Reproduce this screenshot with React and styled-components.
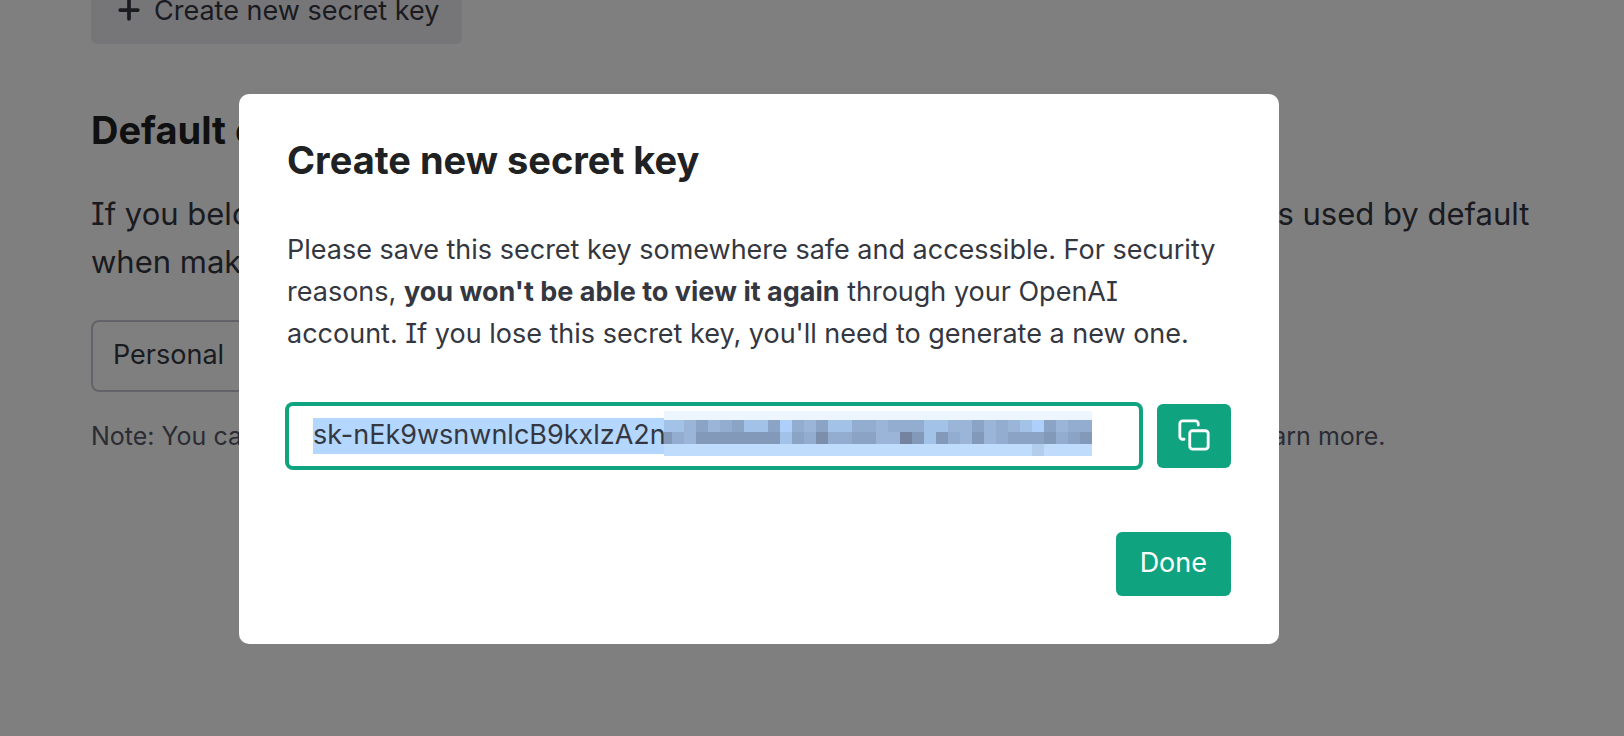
import React, { useState } from 'react';
import styled, { createGlobalStyle } from 'styled-components';
import { FiCopy, FiPlus } from 'react-icons/fi';

const GlobalStyle = createGlobalStyle`
  *, *::before, *::after {
    box-sizing: border-box;
  }
  body {
    margin: 0;
    background: #ffffff;
    color: #353740;
    font-family: Inter, 'Liberation Sans', sans-serif;
    font-feature-settings: 'cv08';
    overflow: hidden;
  }
  button, input, select {
    font: inherit;
    font-feature-settings: inherit;
  }
`;

const Page = styled.main`
  display: flex;
  flex-direction: column;
  align-items: flex-start;
  min-height: 100vh;
  padding: 0 91px;
`;

const Button = styled.button`
  display: inline-flex;
  align-items: center;
  justify-content: center;
  gap: 10px;
  height: 64px;
  padding: 0 24px 4px;
  border: none;
  border-radius: 6px;
  font-size: 27px;
  white-space: nowrap;
  cursor: pointer;
  background: ${(props) => (props.$primary ? '#10a37f' : '#ececf1')};
  color: ${(props) => (props.$primary ? '#ffffff' : '#353740')};
`;

// the page is scrolled a little, so the top of this button is cut off
const NewKeyButton = styled(Button)`
  margin-top: -20px;
  padding: 0 23px 4px;
`;

const IconButton = styled(Button)`
  width: 74px;
  padding: 0 0 2px;
`;

const SectionTitle = styled.h2`
  margin: 62px 0 36px;
  font-size: 38px;
  line-height: 48px;
  font-weight: 700;
  color: #202123;
`;

const SectionText = styled.p`
  margin: 0 0 34px;
  font-size: 31px;
  line-height: 48px;
`;

const OrgSelect = styled.select`
  appearance: none;
  width: 480px;
  max-width: 100%;
  height: 72px;
  padding: 0 20px 4px;
  border: 2px solid #c5c5d2;
  border-radius: 8px;
  background: #ffffff;
  color: #353740;
  font-size: 27px;
`;

const Note = styled.p`
  margin: 26px 0 0;
  font-size: 25px;
  line-height: 36px;
  color: #565869;

  a {
    color: inherit;
    text-decoration: none;
  }
`;

const Backdrop = styled.div`
  position: fixed;
  inset: 0;
  display: flex;
  justify-content: center;
  align-items: flex-start;
  padding: 94px 106px 0 0;
  background: rgba(0, 0, 0, 0.5);
`;

const Modal = styled.section`
  width: 100%;
  max-width: 1040px;
  padding: 48px;
  border-radius: 10px;
  background: #ffffff;
`;

const ModalTitle = styled.h1`
  margin: 0 0 51px;
  font-size: 38px;
  line-height: 36px;
  font-weight: 700;
  color: #202123;
`;

const ModalText = styled.p`
  margin: 0 0 49px;
  font-size: 27px;
  line-height: 42px;
`;

const KeyRow = styled.div`
  display: flex;
  gap: 16px;
`;

const KeyField = styled.div`
  position: relative;
  flex: 1;
`;

const KeyInput = styled.input`
  display: block;
  width: 100%;
  height: 64px;
  padding: 0 24px 4px;
  border: 2px solid #10a37f;
  border-radius: 6px;
  outline: none;
  box-shadow: 0 0 0 2px #10a37f;
  color: #353740;
  font-size: 27px;
  background: linear-gradient(#b3d7ff, #b3d7ff) 24px 12px / 380px 36px no-repeat #ffffff;
`;

const Mosaic = styled.svg`
  position: absolute;
  top: 7px;
  left: 377px;
  pointer-events: none;
`;

const Footer = styled.footer`
  display: flex;
  justify-content: flex-end;
  margin-top: 64px;
`;

const shades = {
  a: '#adcffa',
  b: '#a3c2e8',
  c: '#9ab5d8',
  d: '#92add0',
  e: '#8ba3c4',
  f: '#8399b9',
  g: '#7b8eac',
  h: '#74839f',
  l: '#c0dcfd',
  m: '#b3ceec',
};

const mosaicRows = [
  'bbcecdebbeadcebbddcdddbbccecdcbaecdd',
  'fdcfffffffbedgddeecchfbfdcfcdeeefdef',
  'lllllllllllllllllllllllllllllllmllll',
];

// hides the tail of the key; the first column is narrower than the others
const KeyMosaic = () => (
  <Mosaic width="428" height="45" viewBox="0 0 428 45" shapeRendering="crispEdges" aria-hidden="true">
    <rect width="428" height="9" fill="#edf5ff" />
    {mosaicRows.map((row, y) =>
      row.split('').map((shade, x) => (
        <rect
          key={`${x}-${y}`}
          x={x === 0 ? 0 : x * 12 - 4}
          y={9 + y * 12}
          width={x === 0 ? 8 : 12}
          height="12"
          fill={shades[shade]}
        />
      ))
    )}
  </Mosaic>
);

const SecretKeyModal = ({ onClose }) => {
  const secret = 'sk-nEk9wsnwnlcB9kxlzA2n';

  const handleCopy = () => {
    navigator.clipboard?.writeText(secret);
  };

  return (
    <Backdrop>
      <Modal role="dialog" aria-modal="true" aria-labelledby="modal-title">
        <ModalTitle id="modal-title">Create new secret key</ModalTitle>
        <ModalText>
          Please save this secret key somewhere safe and accessible. For security reasons,{' '}
          <strong>you won't be able to view it again</strong> through your OpenAI account. If you lose
          this secret key, you'll need to generate a new one.
        </ModalText>
        <KeyRow>
          <KeyField>
            <KeyInput type="text" aria-label="Secret key" value={secret} readOnly />
            <KeyMosaic />
          </KeyField>
          <IconButton $primary type="button" aria-label="Copy" onClick={handleCopy}>
            <FiCopy size={34} />
          </IconButton>
        </KeyRow>
        <Footer>
          <Button $primary type="button" onClick={onClose}>Done</Button>
        </Footer>
      </Modal>
    </Backdrop>
  );
};

export default function App() {
  const [open, setOpen] = useState(true);

  return (
    <>
      <GlobalStyle />
      <Page>
        <NewKeyButton type="button" onClick={() => setOpen(true)}>
          <FiPlus size={30} strokeWidth={3} />
          Create new secret key
        </NewKeyButton>
        <SectionTitle>Default organization</SectionTitle>
        <SectionText>
          If you belong to multiple organizations, this setting manages which organization is used by
          default when making requests with the API keys above.
        </SectionText>
        <OrgSelect aria-label="Default organization" defaultValue="personal">
          <option value="personal">Personal</option>
        </OrgSelect>
        <Note>
          Note: You can also specify which organization to use for every API request. See{' '}
          <a href="#authentication">Authentication</a> to learn more.
        </Note>
      </Page>
      {open && <SecretKeyModal onClose={() => setOpen(false)} />}
    </>
  );
}
